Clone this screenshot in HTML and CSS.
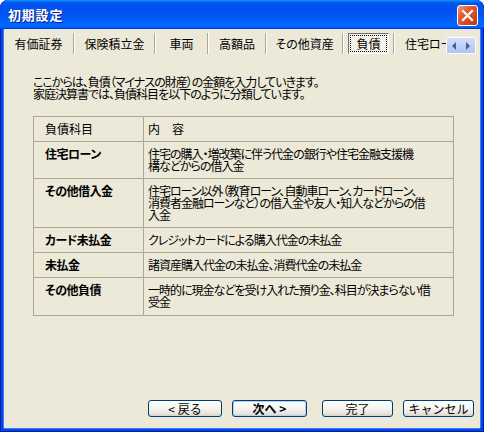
FILE: index.html
```html
<!DOCTYPE html>
<html lang="ja">
<head>
    <meta charset="UTF-8">
    <title>初期設定</title>
    <link rel="stylesheet" href="styles.css">
</head>
<body>
    <div class="window">
        <div class="titlebar">
            <span class="title">初期設定</span>
            <span class="close">
                <svg width="13" height="13" viewBox="0 0 13 13">
                    <path d="M2 2 L11 11 M11 2 L2 11" stroke="#fff" stroke-width="2.2" stroke-linecap="square"/>
                </svg>
            </span>
        </div>

        <div class="body">
            <div class="tabs">
                <div class="tab tab-1">有価証券</div>
                <span class="sep"></span>
                <div class="tab tab-2">保険積立金</div>
                <span class="sep"></span>
                <div class="tab tab-3">車両</div>
                <span class="sep"></span>
                <div class="tab tab-4">高額品</div>
                <span class="sep"></span>
                <div class="tab tab-5">その他資産</div>
                <span class="sep"></span>
                <div class="tab tab-6"><span class="current">負債</span></div>
                <span class="sep"></span>
                <div class="tab tab-7">住宅ローン</div>

                <div class="tab-scroll">
                    <span class="arrow">
                        <svg width="6" height="8" viewBox="0 0 6 8"><path d="M5 0 L1 4 L5 8 Z" fill="#4D5F89"/></svg>
                    </span>
                    <span class="arrow">
                        <svg width="6" height="8" viewBox="0 0 6 8"><path d="M1 0 L5 4 L1 8 Z" fill="#4D5F89"/></svg>
                    </span>
                </div>
            </div>

            <div class="content">
                <p class="intro">ここからは、負債（マイナスの財産）の金額を入力していきます。<br>家庭決算書では、負債科目を以下のように分類しています。</p>

                <table class="debt">
                    <colgroup>
                        <col class="col-name">
                        <col class="col-desc">
                    </colgroup>
                    <tr>
                        <td class="head">負債科目</td>
                        <td class="head head-desc">内　容</td>
                    </tr>
                    <tr>
                        <td class="name">住宅ローン</td>
                        <td class="desc">住宅の購入・増改築に伴う代金の銀行や住宅金融支援機<br>構などからの借入金</td>
                    </tr>
                    <tr>
                        <td class="name">その他借入金</td>
                        <td class="desc">住宅ローン以外（教育ローン、自動車ローン、カードローン、<br>消費者金融ローンなど）の借入金や友人・知人などからの借<br>入金</td>
                    </tr>
                    <tr>
                        <td class="name">カード未払金</td>
                        <td class="desc">クレジットカードによる購入代金の未払金</td>
                    </tr>
                    <tr>
                        <td class="name">未払金</td>
                        <td class="desc">諸資産購入代金の未払金、消費代金の未払金</td>
                    </tr>
                    <tr>
                        <td class="name">その他負債</td>
                        <td class="desc">一時的に現金などを受け入れた預り金、科目が決まらない借<br>受金</td>
                    </tr>
                </table>
            </div>

            <div class="buttons">
                <button class="btn btn-back">&lt; 戻る</button>
                <button class="btn btn-next">次へ &gt;</button>
                <button class="btn btn-finish">完了</button>
                <button class="btn btn-cancel">キャンセル</button>
            </div>
        </div>
    </div>
</body>
</html>
```

FILE: styles.css
```css
body {
    margin: 0;
    background-color: #ffffff;
}
.window {
    width: 484px;
    height: 432px;
    display: flex;
    flex-direction: column;
    background-color: #0046E4;
    border-radius: 8px 8px 0 0;
    box-shadow: inset 1px 0 #0019B0, inset -1px 0 #0019B0, inset 0 -1px #0019B0;
    overflow: hidden;
    font-family: "Noto Sans CJK JP", sans-serif;
    font-size: 12px;
    font-feature-settings: "palt";
    color: #000;
}
.titlebar {
    height: 29px;
    flex: none;
    display: flex;
    align-items: flex-start;
    justify-content: space-between;
    border-radius: 8px 8px 0 0;
    background: linear-gradient(180deg, #0997FF 0%, #0053EE 10%, #0050EE 40%, #0066FF 86%, #0066FF 92%, #005BFF 95%, #003DD7 97%, #003DD7 100%);
}
.title {
    margin: 7px 0 0 8px;
    color: #fff;
    font-weight: bold;
    font-size: 13px;
    line-height: 16px;
    letter-spacing: 0.8px;
    font-feature-settings: normal;
    text-shadow: 1px 1px #0F1D8A;
}
.close {
    width: 21px;
    height: 21px;
    margin: 5px 6px 0 0;
    box-sizing: border-box;
    border: 1px solid #fff;
    border-radius: 3px;
    display: flex;
    align-items: center;
    justify-content: center;
    background: linear-gradient(135deg, #F4A487 0%, #E3603A 30%, #D44A24 65%, #BC3412 100%);
}
.body {
    flex: 1;
    margin: 0 4px 4px;
    display: flex;
    flex-direction: column;
    background-color: #ECE9D8;
    box-shadow: -1px 0 #3D7BF0, 1px 0 #3D7BF0, 0 1px #3D7BF0;
}

/* tab strip */
.tabs {
    position: relative;
    height: 28px;
    flex: none;
    display: flex;
    align-items: center;
    overflow: hidden;
}
.tab {
    flex: none;
    text-align: center;
    line-height: 14px;
    white-space: nowrap;
    padding-top: 2px;
}
.tab-1 { width: 69px; }
.tab-2 { width: 79px; }
.tab-3 { width: 51px; }
.tab-4 { width: 56px; }
.tab-5 { width: 75px; }
.tab-6 { width: 49px; padding-top: 0; }
.tab-7 {
    width: 80px;
    padding-left: 10px;
    text-align: left;
}
.sep {
    flex: none;
    width: 1px;
    height: 21px;
    background-color: #ACA899;
    border-right: 1px solid #fff;
}
.current {
    display: block;
    margin: 0 4px;
    height: 21px;
    box-sizing: border-box;
    padding-top: 2px;
    border: 1px solid;
    border-color: #716F64 #fff #fff #716F64;
    outline: 1px dotted #000;
    outline-offset: -3px;
    line-height: 15px;
    background: repeating-conic-gradient(#ffffff 0 25%, #ECE9D8 0 50%) 0 0 / 2px 2px;
}
.tab-scroll {
    position: absolute;
    left: 442px;
    top: 8px;
    display: flex;
    border: 1px solid #fff;
    border-radius: 2px;
}
.arrow {
    width: 14px;
    height: 15px;
    display: flex;
    align-items: center;
    justify-content: center;
    background: linear-gradient(180deg, #D3DEF9 0%, #C1D1F7 50%, #B1C4F2 100%);
}

/* main content */
.content {
    flex: 1;
    padding: 19px 0 0 29px;
}
.intro {
    margin: 0;
    line-height: 12px;
    letter-spacing: -1px;
}
.debt {
    margin-top: 16px;
    width: 420px;
    border-collapse: collapse;
    table-layout: fixed;
}
.col-name { width: 110px; }
.col-desc { width: 310px; }
.debt td {
    border: 1px solid #ACA899;
    padding: 6px 0 6px 11px;
    line-height: 12px;
    vertical-align: top;
    white-space: nowrap;
}
.debt .name {
    font-weight: bold;
    letter-spacing: -0.5px;
}
.debt .head-desc {
    padding-left: 4px;
}
.debt .desc {
    padding-left: 4px;
    letter-spacing: -1px;
    overflow: hidden;
}
.debt tr:last-child td {
    padding-bottom: 7px;
}

/* button row */
.buttons {
    flex: none;
    display: flex;
    padding: 0 0 11px 144px;
}
.btn {
    height: 17px;
    box-sizing: border-box;
    padding: 0;
    border: 1px solid #003C74;
    border-radius: 3px;
    background: linear-gradient(180deg, #FFFFFF 0%, #F4F4F0 50%, #E6E3DA 85%, #D6D0C5 100%);
    font-family: "Noto Sans CJK JP", sans-serif;
    font-size: 12px;
    line-height: 14px;
    color: #000;
    text-align: center;
}
.btn-back { width: 74px; }
.btn-next {
    width: 75px;
    margin-left: 10px;
    font-weight: bold;
    box-shadow: inset 0 0 0 1px #B6CFF5;
}
.btn-finish { width: 71px; margin-left: 15px; }
.btn-cancel { width: 71px; margin-left: 10px; }
```
